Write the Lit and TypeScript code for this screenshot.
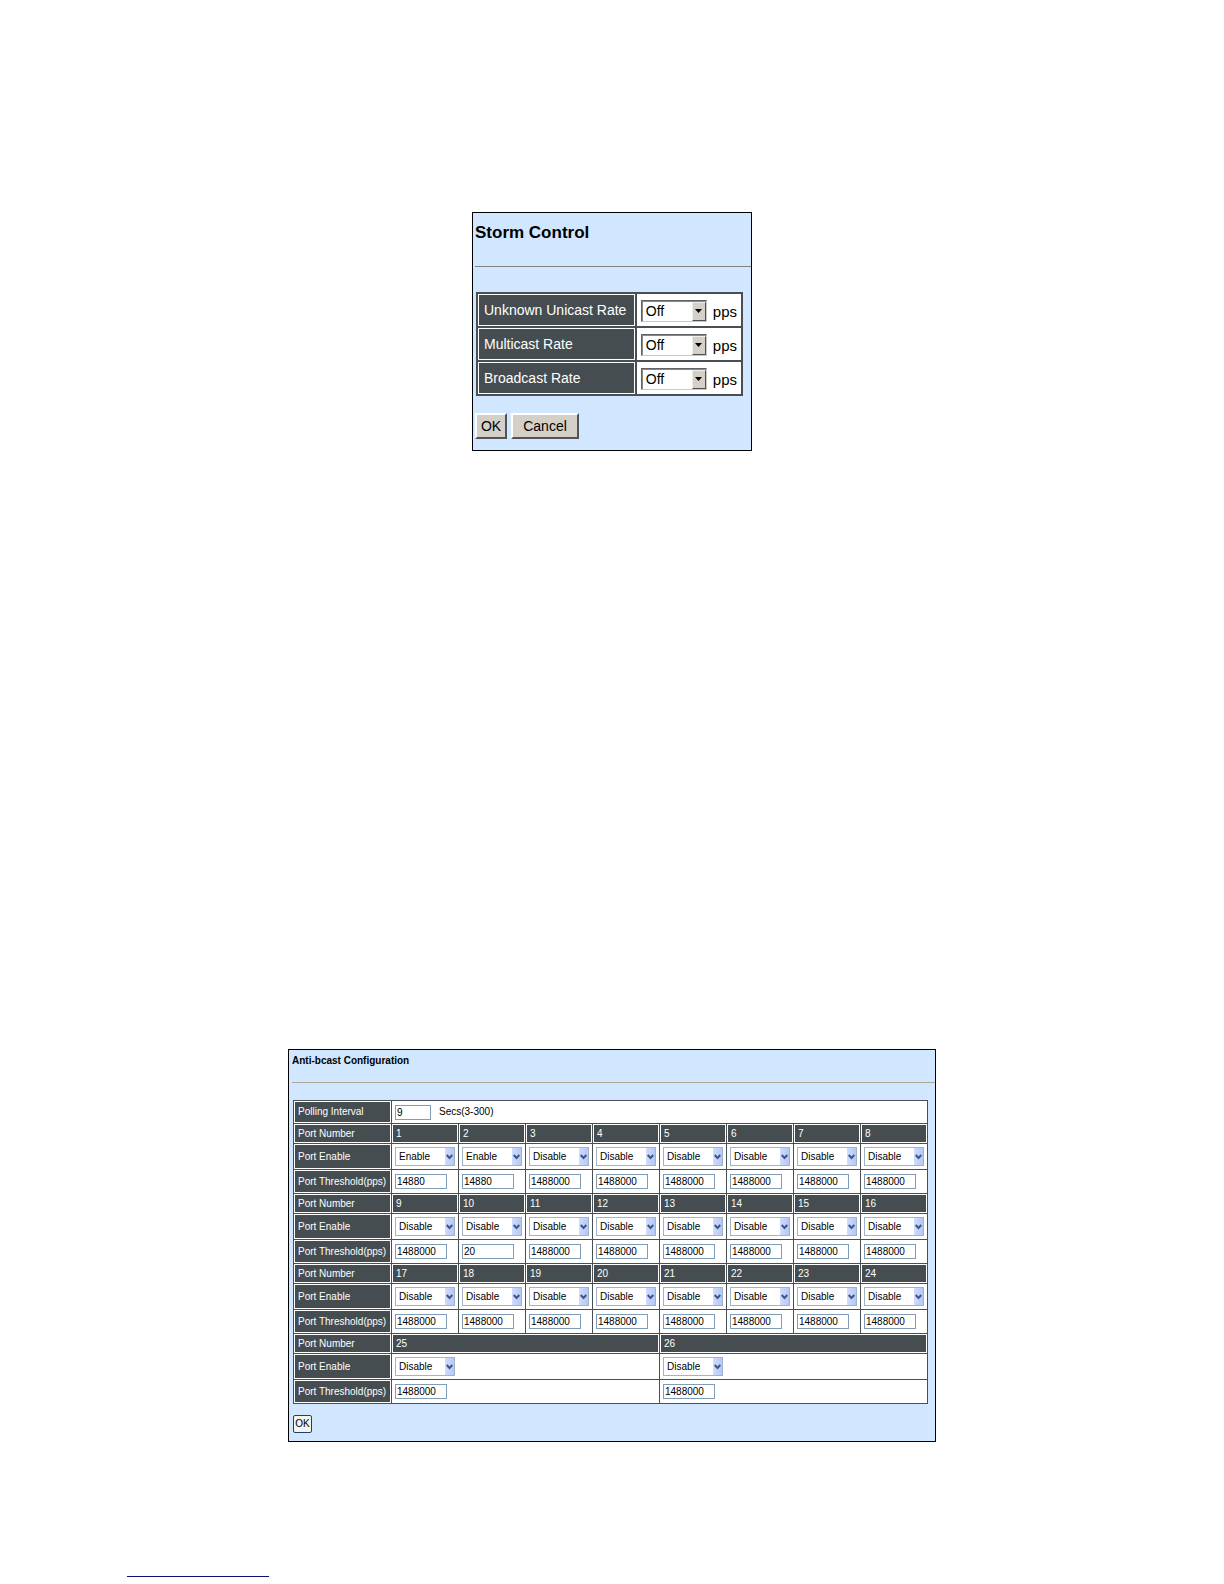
import { LitElement, html, css } from 'lit';
import { customElement, property, state } from 'lit/decorators.js';

interface Port {
  id: number;
  enabled: boolean;
  threshold: string;
}

const PORTS: Port[] = Array.from({ length: 26 }, (_, i) => ({
  id: i + 1,
  enabled: i < 2,
  threshold: i < 2 ? '14880' : i === 9 ? '20' : '1488000',
}));

const GROUPS = [PORTS.slice(0, 8), PORTS.slice(8, 16), PORTS.slice(16, 24), PORTS.slice(24)];

@customElement('storm-control')
export class StormControlElement extends LitElement {
  @state()
  private rates = ['Unknown Unicast', 'Multicast', 'Broadcast'];

  render() {
    return html`
      <h2>Storm Control</h2>
      <hr />
      <table>
        ${this.rates.map(
          (rate, i) => html`
            <tr>
              <th scope="row"><label for="rate-${i}">${rate} Rate</label></th>
              <td>
                <div class="field">
                  <span class="picker">
                    <select id="rate-${i}">
                      <option>Off</option>
                      <option>1</option>
                      <option>2</option>
                      <option>4</option>
                    </select>
                    <span class="arrow">
                      <svg width="7" height="4" viewBox="0 0 7 4"><path d="M0 0h7L3.5 4z" /></svg>
                    </span>
                  </span>
                  <span class="unit">pps</span>
                </div>
              </td>
            </tr>
          `
        )}
      </table>
      <div class="actions">
        <button type="button">OK</button>
        <button type="button" class="wide">Cancel</button>
      </div>
    `;
  }

  static styles = [
    css`
      :host {
        display: block;
        box-sizing: border-box;
        width: 100%;
        max-width: 280px;
        padding: 8px 0 11px 2px;
        border: 1px solid #000;
        background-color: #d0e7ff;
        font: 14px/20px 'Liberation Sans', Arial, sans-serif;
        color: #000;
      }

      h2 {
        margin: 0;
        font-size: 17px;
        line-height: 24px;
      }

      hr {
        height: 1px;
        margin: 21px 0 25px;
        border: 0;
        background-color: #808284;
      }

      table {
        width: 267px;
        margin-left: 1px;
        border-collapse: collapse;
        border: 2px solid #485054;
      }

      th,
      td {
        box-sizing: border-box;
        height: 34px;
        padding: 0 4px;
        border: 2px solid #485054;
        background-color: #fff;
        text-align: left;
        font-weight: normal;
      }

      th {
        width: 159px;
        padding: 0 6px;
        background-color: #454d50;
        box-shadow: inset 0 0 0 1px #fff;
        color: #fff;
        white-space: nowrap;
      }

      .field {
        display: flex;
        align-items: center;
        gap: 6px;
      }

      .unit {
        padding-top: 4px;
        font-size: 15px;
      }

      .picker {
        display: grid;
        width: 66px;
        height: 21px;
      }

      select,
      .arrow {
        grid-area: 1 / 1;
      }

      select {
        appearance: none;
        box-sizing: border-box;
        width: 100%;
        margin: 0;
        padding: 0 4px;
        border: 1px solid;
        border-color: #606468 #c8c8c8 #c8c8c8 #606468;
        border-radius: 0;
        box-shadow: inset 1px 1px #888;
        background-color: #fff;
        font: inherit;
        color: #000;
      }

      .arrow {
        display: flex;
        align-items: center;
        justify-content: center;
        justify-self: end;
        box-sizing: border-box;
        width: 14px;
        margin: 2px 1px 1px 0;
        border: 1px solid;
        border-color: #f0eeea #505050 #505050 #f0eeea;
        background-color: #d4d0c8;
        pointer-events: none;
      }

      .actions {
        display: flex;
        gap: 4px;
        margin-top: 17px;
      }

      button {
        width: 32px;
        height: 26px;
        padding: 0;
        border: 2px solid;
        border-color: #fff #505458 #505458 #fff;
        background-color: #d4d0c8;
        font: inherit;
        color: #000;
      }

      .wide {
        width: 68px;
      }
    `,
  ];
}

@customElement('anti-bcast')
export class AntiBcastElement extends LitElement {
  @property({ attribute: false })
  groups = GROUPS;

  renderGroup(ports: Port[]) {
    const span = 8 / ports.length;
    return html`
      <tr class="number">
        <th scope="row">Port Number</th>
        ${ports.map((port) => html`<th scope="col" colspan=${span}>${port.id}</th>`)}
      </tr>
      <tr class="enable">
        <th scope="row">Port Enable</th>
        ${ports.map(
          (port) => html`
            <td colspan=${span}>
              <div class="picker">
                <select aria-label="Port ${port.id} enable">
                  <option ?selected=${port.enabled}>Enable</option>
                  <option ?selected=${!port.enabled}>Disable</option>
                </select>
                <span class="arrow">
                  <svg width="7" height="6" viewBox="0 0 7 6">
                    <path d="M.7 1l2.8 3 2.8-3" fill="none" stroke="#405484" stroke-width="2" />
                  </svg>
                </span>
              </div>
            </td>
          `
        )}
      </tr>
      <tr class="threshold">
        <th scope="row">Port Threshold(pps)</th>
        ${ports.map(
          (port) => html`
            <td colspan=${span}>
              <input type="text" aria-label="Port ${port.id} threshold" .value=${port.threshold} />
            </td>
          `
        )}
      </tr>
    `;
  }

  render() {
    return html`
      <h2>Anti-bcast Configuration</h2>
      <hr />
      <table>
        <colgroup>
          <col class="head" />
          <col span="8" />
        </colgroup>
        <tr class="interval">
          <th scope="row"><label for="interval">Polling Interval</label></th>
          <td colspan="8">
            <div class="field">
              <input id="interval" class="short" type="text" .value=${'9'} />
              <span>Secs(3-300)</span>
            </div>
          </td>
        </tr>
        ${this.groups.map((ports) => this.renderGroup(ports))}
      </table>
      <button type="button">OK</button>
    `;
  }

  static styles = [
    css`
      :host {
        display: block;
        box-sizing: border-box;
        width: 100%;
        max-width: 648px;
        padding: 4px 0 8px 3px;
        border: 1px solid #000;
        background-color: #d0e7ff;
        font: 10px/14px 'Liberation Sans', Arial, sans-serif;
        color: #000;
      }

      h2 {
        margin: 0;
        font-size: 10px;
        line-height: 14px;
      }

      hr {
        height: 1px;
        margin: 14px 0 17px;
        border: 0;
        background-color: #aca899;
      }

      table {
        width: calc(100% - 8px);
        margin-left: 1px;
        border-collapse: collapse;
        table-layout: fixed;
      }

      .head {
        width: 98px;
      }

      th,
      td {
        box-sizing: border-box;
        padding: 0 3px;
        border: 1px solid #485054;
        background-color: #fff;
        text-align: left;
        font-weight: normal;
        white-space: nowrap;
      }

      th {
        padding: 0 4px;
        background-color: #454d50;
        box-shadow: inset 0 0 0 1px #fff;
        color: #fff;
      }

      .interval {
        height: 23px;
      }

      .number {
        height: 20px;
      }

      .enable {
        height: 26px;
      }

      .threshold {
        height: 24px;
      }

      .field {
        display: flex;
        align-items: center;
        gap: 8px;
      }

      input {
        display: block;
        box-sizing: border-box;
        width: 52px;
        height: 15px;
        margin: 0;
        padding: 0 1px;
        border: 1px solid #7f9db9;
        background-color: #fff;
        font: inherit;
        color: #000;
      }

      .short {
        width: 36px;
      }

      .picker {
        display: grid;
        width: 60px;
        height: 19px;
      }

      select,
      .arrow {
        grid-area: 1 / 1;
      }

      select {
        appearance: none;
        box-sizing: border-box;
        width: 100%;
        margin: 0;
        padding: 0 3px;
        border: 1px solid #9fb4c9;
        border-radius: 0;
        background-color: #fff;
        font: inherit;
        color: #000;
      }

      .arrow {
        display: flex;
        align-items: center;
        justify-content: center;
        justify-self: end;
        width: 9px;
        margin: 1px;
        background: linear-gradient(90deg, #d0dcff, #b4c8f6);
        pointer-events: none;
      }

      button {
        display: block;
        width: 19px;
        height: 18px;
        margin: 11px 0 0 1px;
        padding: 0;
        border: 1px solid #1c4068;
        border-radius: 2px;
        background-color: #f4f4f0;
        font: inherit;
        color: #000;
      }
    `,
  ];
}

@customElement('app-root')
export class AppRootElement extends LitElement {
  render() {
    return html`
      <main>
        <storm-control></storm-control>
        <anti-bcast></anti-bcast>
      </main>
      <footer><div class="rule"></div></footer>
    `;
  }

  static styles = [
    css`
      :host {
        display: block;
        padding: 212px 0 8px;
        background-color: #fff;
      }

      main {
        display: flex;
        flex-direction: column;
        align-items: center;
        gap: 598px;
      }

      footer {
        padding: 134px 127px 0;
      }

      .rule {
        width: 142px;
        height: 1px;
        background-color: #10107c;
      }
    `,
  ];
}
